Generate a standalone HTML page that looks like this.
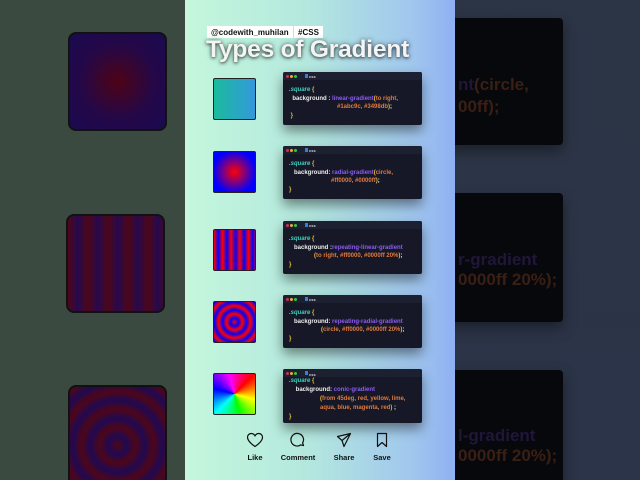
<!DOCTYPE html>
<html><head><style>
*{margin:0;padding:0;box-sizing:border-box}
html,body{width:640px;height:480px;overflow:hidden}
body{position:relative;font-family:"Liberation Sans",sans-serif;background:#3b4a40}
.abs{position:absolute}
.left{left:0;top:0;width:185px;height:480px;background:#3b4a40}
.right{left:455px;top:0;width:185px;height:480px;background:linear-gradient(#2c3546,#2b3448)}
.center{left:185px;top:0;width:270px;height:480px;background:linear-gradient(90deg,#c4f7dc 0%,#b4e8de 45%,#a0c6ee 85%,#8fb0f2 100%)}
.bsq{border:2px solid #111;border-radius:8px}
.rc{background:#07080c;border-radius:4px;box-shadow:0 6px 14px rgba(0,0,0,.4);overflow:hidden;font-size:17px;font-weight:bold;white-space:nowrap}
.tag{background:#fff;font-size:8px;font-weight:bold;color:#111;padding:2px 4px;top:26px;height:12px;line-height:9px}
.title{left:206px;top:36px;font-size:24.5px;font-weight:bold;color:#f4f4f4;text-shadow:0 1px 3px rgba(0,0,0,.7),0 0 6px rgba(0,0,0,.4);letter-spacing:-.2px}
.sq{width:43px;height:42px;border:1px solid #222;border-radius:2px;left:213px}
.card{left:283px;width:139px;height:53px;background:#161827;border-radius:2px;box-shadow:0 6px 12px rgba(0,0,0,.45);font-size:6px;font-weight:bold;color:#eee;line-height:8.5px;white-space:nowrap;overflow:hidden}
.card .bar{height:8px;background:#1d2031;position:relative}
.dot{position:absolute;top:3px;width:3px;height:3px;border-radius:50%}
.card .bar i{position:absolute;left:22px;top:2px;width:3px;height:4px;background:#3a7bd5}
.card .bar b{position:absolute;left:26px;top:1px;font-size:4px;color:#ccc}
.code{padding:3px 0 0 6px}
.s{color:#3fd0c0;font-style:italic}.p{color:#8a5cf0}.o{color:#e0793e}.y{color:#e8c23a}
.act{top:432px;font-size:7.5px;font-weight:bold;color:#111;text-align:center}
.dp{color:#21163a}.do{color:#3a1f14}
</style></head><body>
<div class="abs left"></div>
<div class="abs bsq" style="left:68px;top:32px;width:99px;height:99px;background:radial-gradient(circle,#4e0316,#240848 55%,#1a0a50)"></div>
<div class="abs bsq" style="left:66px;top:214px;width:99px;height:99px;background:repeating-linear-gradient(90deg,#4e0618 0,#260a4e 10px,#4e0618 20px)"></div>
<div class="abs bsq" style="left:68px;top:385px;width:99px;height:110px;background:repeating-radial-gradient(circle at 50% 55%,#4e0618 0,#200952 9px,#4e0618 18px)"></div>
<div class="abs right"></div>
<div class="abs rc" style="left:445px;top:18px;width:118px;height:127px"><div style="position:absolute;left:13px;top:57px" class="do"><span class="dp">nt</span>(circle,</div><div style="position:absolute;left:13px;top:79px" class="do">00ff);</div></div>
<div class="abs rc" style="left:445px;top:193px;width:118px;height:129px"><div style="position:absolute;left:13px;top:57px" class="dp">r-gradient</div><div style="position:absolute;left:13px;top:77px" class="do">0000ff 20%);</div></div>
<div class="abs rc" style="left:445px;top:370px;width:118px;height:120px"><div style="position:absolute;left:13px;top:56px" class="dp">l-gradient</div><div style="position:absolute;left:13px;top:76px" class="do">0000ff 20%);</div></div>
<div class="abs center"></div>
<div class="abs tag" style="left:207px">@codewith_muhilan</div>
<div class="abs tag" style="left:294px">#CSS</div>
<div class="abs title">Types of Gradient</div>

<div class="abs sq" style="top:78px;background:linear-gradient(90deg,#1abc9c,#3498db)"></div>
<div class="abs sq" style="top:151px;background:radial-gradient(circle,#ff0000,#0000ff 75%)"></div>
<div class="abs sq" style="top:229px;background:repeating-linear-gradient(90deg,#ff0000 0,#0000ff 4.3px,#ff0000 8.6px)"></div>
<div class="abs sq" style="top:301px;background:repeating-radial-gradient(circle,#ff0000 0,#0000ff 4px,#ff0000 8px)"></div>
<div class="abs sq" style="top:373px;background:conic-gradient(from 45deg,red,yellow,lime,aqua,blue,magenta,red)"></div>

<div class="abs card" style="top:72px"><div class="bar"><span class="dot" style="left:3px;background:#e0245e"></span><span class="dot" style="left:7px;background:#e8b020"></span><span class="dot" style="left:11px;background:#2ecc40"></span><i></i><b>css</b></div>
<div class="code" style="padding-top:6px"><span class="s">.square</span> <span class="y">{</span><br>&nbsp;&nbsp;background : <span class="p">linear-gradient</span><span class="y">(</span><span class="o">to right,</span><br><span style="padding-left:48px" class="o">#1abc9c, #3498db</span><span class="y">)</span>;<br>&nbsp;<span class="y">}</span></div></div>

<div class="abs card" style="top:146px"><div class="bar"><span class="dot" style="left:3px;background:#e0245e"></span><span class="dot" style="left:7px;background:#e8b020"></span><span class="dot" style="left:11px;background:#2ecc40"></span><i></i><b>css</b></div>
<div class="code" style="padding-top:6px"><span class="s">.square</span> <span class="y">{</span><br>&nbsp;&nbsp;&nbsp;background: <span class="p">radial-gradient</span><span class="y">(</span><span class="o">circle,</span><br><span style="padding-left:42px" class="o">#ff0000, #0000ff</span><span class="y">)</span>;<br><span class="y">}</span></div></div>

<div class="abs card" style="top:221px"><div class="bar"><span class="dot" style="left:3px;background:#e0245e"></span><span class="dot" style="left:7px;background:#e8b020"></span><span class="dot" style="left:11px;background:#2ecc40"></span><i></i><b>css</b></div>
<div class="code" style="padding-top:6px"><span class="s">.square</span> <span class="y">{</span><br>&nbsp;&nbsp;&nbsp;background :<span class="p">repeating-linear-gradient</span><br><span style="padding-left:25px"><span class="y">(</span><span class="o">to right, #ff0000, #0000ff 20%</span><span class="y">)</span>;</span><br><span class="y">}</span></div></div>

<div class="abs card" style="top:295px"><div class="bar"><span class="dot" style="left:3px;background:#e0245e"></span><span class="dot" style="left:7px;background:#e8b020"></span><span class="dot" style="left:11px;background:#2ecc40"></span><i></i><b>css</b></div>
<div class="code" style="padding-top:6px"><span class="s">.square</span> <span class="y">{</span><br>&nbsp;&nbsp;&nbsp;background: <span class="p">repeating-radial-gradient</span><br><span style="padding-left:32px"><span class="y">(</span><span class="o">circle, #ff0000, #0000ff 20%</span><span class="y">)</span>;</span><br><span class="y">}</span></div></div>

<div class="abs card" style="top:369px;height:54px;line-height:9px"><div class="bar"><span class="dot" style="left:3px;background:#e0245e"></span><span class="dot" style="left:7px;background:#e8b020"></span><span class="dot" style="left:11px;background:#2ecc40"></span><i></i><b>css</b></div>
<div class="code" style="padding-top:0"><span class="s">.square</span> <span class="y">{</span><br>&nbsp;&nbsp;&nbsp;&nbsp;background: <span class="p">conic-gradient</span><br><span style="padding-left:31px"><span class="y">(</span><span class="o">from 45deg, red, yellow, lime,</span></span><br><span style="padding-left:31px" class="o">aqua, blue, magenta, red</span><span class="y">)</span> ;<br><span class="y">}</span></div></div>

<svg class="abs" style="left:246px;top:432px" width="18" height="16" viewBox="0 0 18 16"><path d="M9 14.5C4 11 1.5 8 1.5 5.2 1.5 3 3.2 1.5 5.2 1.5 7 1.5 8.3 2.6 9 3.8 9.7 2.6 11 1.5 12.8 1.5 14.8 1.5 16.5 3 16.5 5.2 16.5 8 14 11 9 14.5Z" fill="none" stroke="#111" stroke-width="1.2"/></svg>
<svg class="abs" style="left:290px;top:432px" width="16" height="16" viewBox="0 0 16 16"><path d="M13.5 13.5 12.6 11A6.3 6.3 0 1 0 10.8 12.9Z" fill="none" stroke="#111" stroke-width="1.2" stroke-linejoin="round"/></svg>
<svg class="abs" style="left:336px;top:432px" width="16" height="16" viewBox="0 0 16 16"><path d="M14.5 1.5 1.5 4.5 6 8.5 8 14.5ZM6 8.5 14.5 1.5" fill="none" stroke="#111" stroke-width="1.2" stroke-linejoin="round"/></svg>
<svg class="abs" style="left:375px;top:432px" width="14" height="16" viewBox="0 0 14 16"><path d="M2.5 1.5H11.5V14.5L7 10.5 2.5 14.5Z" fill="none" stroke="#111" stroke-width="1.2" stroke-linejoin="round"/></svg>
<div class="abs act" style="left:240px;width:30px;top:453px">Like</div>
<div class="abs act" style="left:276px;width:44px;top:453px">Comment</div>
<div class="abs act" style="left:328px;width:32px;top:453px">Share</div>
<div class="abs act" style="left:367px;width:30px;top:453px">Save</div>
</body></html>
